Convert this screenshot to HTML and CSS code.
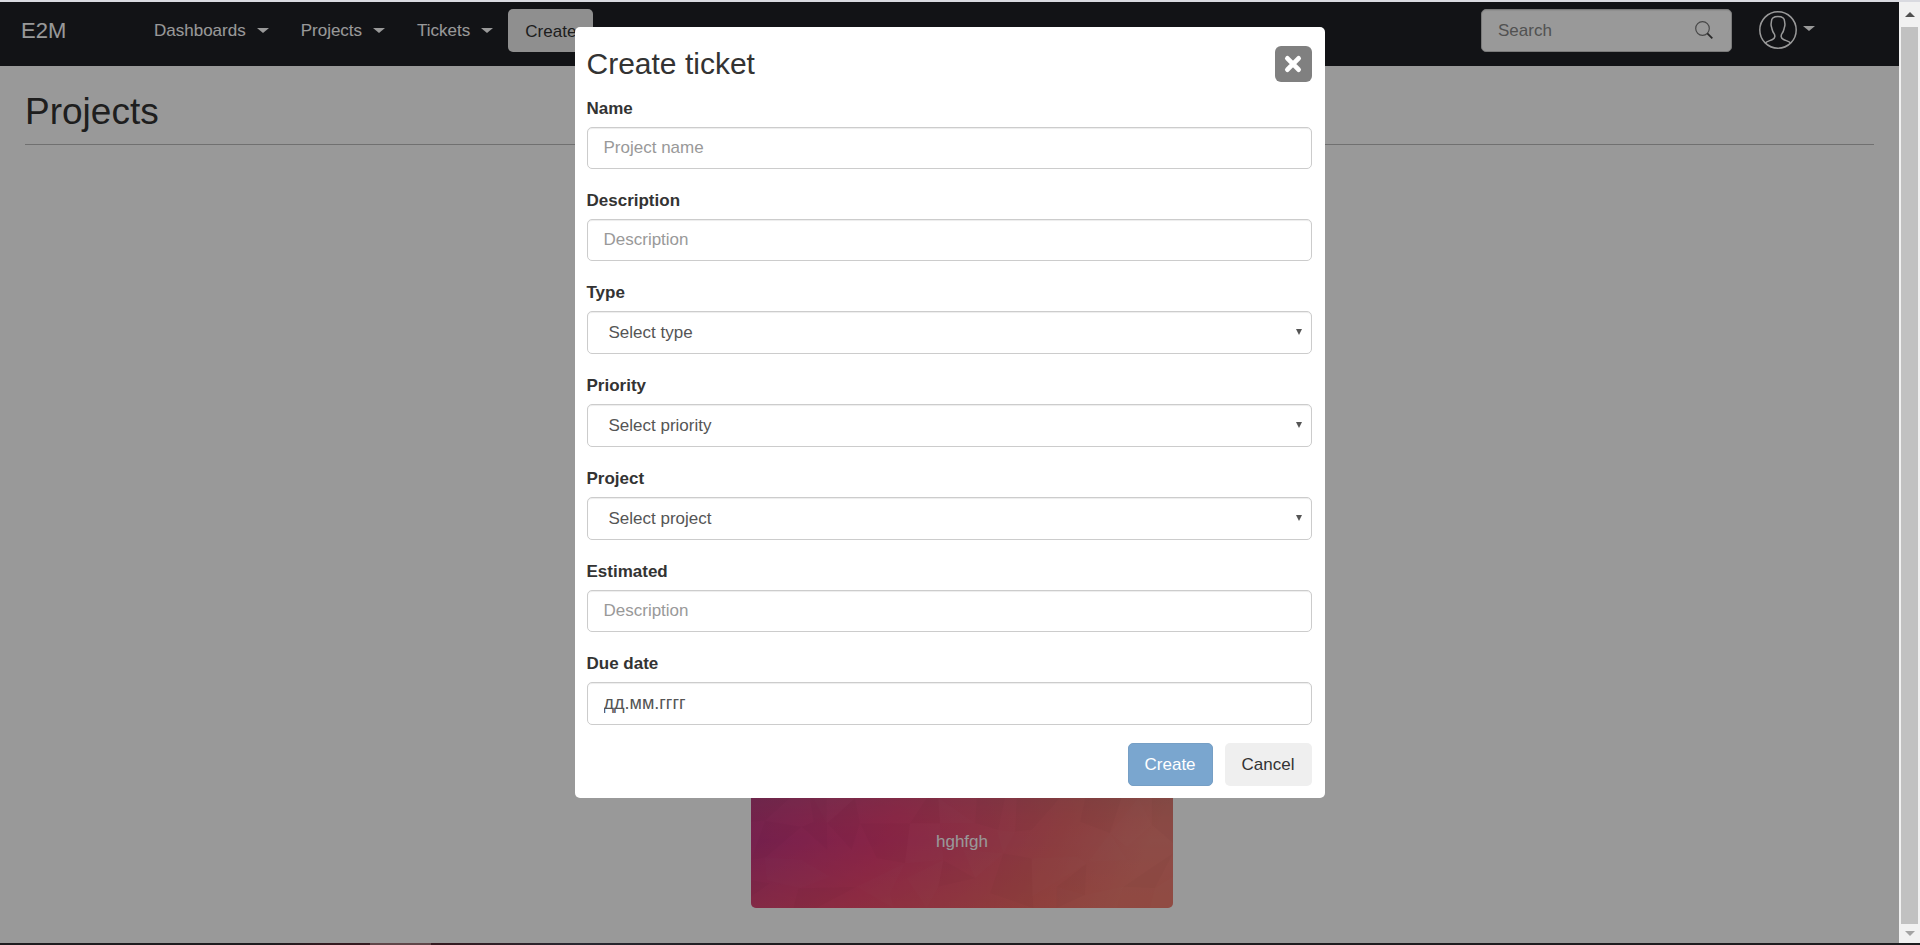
FILE: index.html
```html
<!DOCTYPE html>
<html lang="en">
<head>
<meta charset="utf-8">
<title>E2M - Projects</title>
<link rel="stylesheet" href="styles.css">
</head>
<body>
<div class="edge edge-top"></div>
<div class="viewport">
  <div class="page">
    <nav class="navbar">
      <a class="brand" href="#">E2M</a>
      <div class="menu">
        <a class="menu-link" href="#">Dashboards<span class="caret"></span></a>
        <a class="menu-link" href="#">Projects<span class="caret"></span></a>
        <a class="menu-link" href="#">Tickets<span class="caret"></span></a>
        <button class="btn btn-plain nav-create" type="button">Create</button>
      </div>
      <div class="search">
        <input class="control search-input" type="text" placeholder="Search" aria-label="Search">
        <svg class="search-icon" viewBox="0 0 20 20" width="20" height="20"><circle cx="8.500" cy="8.500" r="6.800" fill="none" stroke="#777" stroke-width="1.200"/><path d="M13.300 13.300l5 5" stroke="#444" stroke-width="1.800"/></svg>
      </div>
      <a class="user" href="#" aria-label="Account">
        <svg viewBox="0 0 38 38" width="38" height="38" fill="none" stroke="#fff" stroke-width="1.500"><circle cx="19" cy="19" r="18.200"/><path d="M6.500 32C8 30 11 29.800 13.500 28.500C16.500 27 16.300 24.500 14.800 22.200C12.900 19.500 13.300 18.500 12.500 16C11.500 13.500 12.300 12.500 12.400 10.500C12.500 7 15.500 5.600 19 5.600C22.500 5.600 25.500 7 25.600 10.500C25.700 12.500 26.500 13.500 25.500 16C24.700 18.500 25.100 19.500 23.200 22.200C21.700 24.500 21.500 27 24.500 28.500C27 29.800 30 30 31.500 32"/></svg>
        <span class="caret"></span>
      </a>
    </nav>
    <main class="content">
      <h1 class="page-title">Projects</h1>
      <a class="card" href="#">
        <svg class="card-art" viewBox="63 -18 1266 402" preserveAspectRatio="none">
          <defs>
            <linearGradient id="tone" x1="0" y1="0" x2="1" y2="0.150"><stop offset="0" stop-color="#bc3685"/><stop offset=".2" stop-color="#d3397e"/><stop offset=".38" stop-color="#e43d76"/><stop offset=".58" stop-color="#e65072"/><stop offset=".78" stop-color="#e8666b"/><stop offset="1" stop-color="#ec7f77"/></linearGradient>
            <linearGradient id="low" x1="0" y1="0" x2="0" y2="1"><stop offset=".1" stop-color="#8a8078" stop-opacity=".22"/><stop offset=".5" stop-color="#ff5a50" stop-opacity="0"/><stop offset="1" stop-color="#ff7050" stop-opacity=".25"/></linearGradient>
          </defs>
          <rect x="63" y="-18" width="1266" height="402" fill="url(#tone)"/>
          <rect x="63" y="-18" width="1266" height="402" fill="url(#low)"/>
          <g fill="#000" fill-opacity=".02">
            <path d="M63 125L105 122L180 54L63 0zM215 140L292 210L290 54L240 54L250 125zM375 54L390 130L365 210L292 130zM63 240L108 232L215 140L105 122zM440 235L525 250L540 130L390 130zM625 54L630 130L540 130L590 54zM740 54L735 130L805 150L825 54zM855 155L905 150L990 54L860 54zM1065 54L1050 125L1140 160L1175 54zM1265 54L1265 135L1329 190V54zM205 325L190 384L260 384L380 320zM625 320L735 295L640 240zM780 340L820 220L905 235L910 384zM1065 345L1070 250L980 320V384zM1180 320L1275 325L1329 220zM63 350L120 310L63 300z"/>
          </g>
          <g fill="#fff" fill-opacity=".02">
            <path d="M105 232L215 240L210 325L110 300zM215 240L300 290L210 325zM380 320L525 250L480 340L490 384zM530 295L640 240L625 320L590 384zM735 295L820 220L700 210zM905 235L1040 230L1070 250L905 350zM1075 245L1140 160L1190 240zM1140 160L1225 54L1265 135L1190 200zM800 150L855 155L820 220zM250 54L375 54L290 130zM540 130L630 130L640 240L525 250zM980 320L1065 345L1180 320L1160 384H980zM1275 325L1329 290V384L1260 384zM630 130L735 130L625 54z"/>
          </g>
        </svg>
        <span class="card-name">hghfgh</span>
      </a>
    </main>
  </div>
  <div class="backdrop">
    <form class="modal" role="dialog" aria-labelledby="dialog-title">
      <header class="modal-head">
        <h2 class="modal-title" id="dialog-title">Create ticket</h2>
        <button class="close" type="button" aria-label="Close"><svg viewBox="0 0 18 18" width="18" height="18"><path d="M3.400 3.400L14.600 14.600M14.600 3.400L3.400 14.600" stroke="#fff" stroke-width="4.800" stroke-linecap="round"/></svg></button>
      </header>
      <div class="field"><label for="name">Name</label><input class="control" id="name" type="text" placeholder="Project name"></div>
      <div class="field"><label for="desc">Description</label><input class="control" id="desc" type="text" placeholder="Description"></div>
      <div class="field"><label for="type">Type</label><div class="pick"><select class="control" id="type"><option>Select type</option></select><span class="arrow"></span></div></div>
      <div class="field"><label for="priority">Priority</label><div class="pick"><select class="control" id="priority"><option>Select priority</option></select><span class="arrow"></span></div></div>
      <div class="field"><label for="project">Project</label><div class="pick"><select class="control" id="project"><option>Select project</option></select><span class="arrow"></span></div></div>
      <div class="field"><label for="estimated">Estimated</label><input class="control" id="estimated" type="text" placeholder="Description"></div>
      <div class="field"><label for="due">Due date</label><input class="control date" id="due" type="text" placeholder="дд.мм.гггг"></div>
      <footer class="actions">
        <button class="btn btn-primary" type="submit">Create</button>
        <button class="btn btn-plain" type="button">Cancel</button>
      </footer>
    </form>
  </div>
  <div class="scrollbar"><span class="scroll-up"></span><span class="thumb"></span><span class="scroll-down"></span></div>
</div>
<div class="edge edge-bottom"></div>
</body>
</html>
```
FILE: styles.css
```css
* { box-sizing: border-box; }
body {
  margin: 0;
  height: 100vh;
  display: flex;
  flex-direction: column;
  overflow: hidden;
  font: 17px/25px "Liberation Sans", Arial, sans-serif;
  color: #333;
  background: #fff;
}
a { color: inherit; text-decoration: none; }
.edge { flex: none; height: 2px; }
.edge-top { background: #d9dae0; }
.edge-bottom {
  background: linear-gradient(90deg, #1e1c1f 0 270px, #351a20 330px 370px, #604649 370px 431px, #351a20 431px 440px, #292831 580px, #1e1c1f 760px);
}
.viewport { flex: 1; min-height: 0; display: flex; position: relative; }
.page { flex: 1; display: flex; flex-direction: column; }

.navbar {
  display: flex;
  align-items: flex-start;
  height: 64px;
  padding: 7px 84px 0 21px;
  background: #1e2026;
  color: #fff;
}
.brand { width: 133px; font-size: 22px; line-height: 43px; }
.menu { display: flex; gap: 32px; flex: 1; line-height: 43px; }
.menu-link { display: flex; align-items: center; gap: 11px; }
.caret {
  border: 6px solid transparent;
  border-top: 5px solid #fff;
  border-bottom: 0;
}
.nav-create { margin-left: -17px; }
.search { position: relative; width: 251px; margin-right: 27px; }
.search-icon { position: absolute; right: 18px; top: 11px; }
.user { display: flex; align-items: flex-start; gap: 6px; padding-top: 2px; }
.user .caret { margin-top: 15px; }

.content {
  flex: 1;
  display: flex;
  flex-direction: column;
  padding: 25px 25px 35px;
}
.page-title {
  margin: 0;
  padding-bottom: 12px;
  border-bottom: 1px solid #bbb;
  font-size: 37px;
  line-height: 41px;
  font-weight: 400;
}
.card {
  position: relative;
  display: flex;
  align-items: center;
  justify-content: center;
  align-self: center;
  width: 422px;
  height: 134px;
  margin: auto 0 0 25px;
  border-radius: 5px;
  overflow: hidden;
  color: #fff;
}
.card-art { position: absolute; inset: 0; width: 100%; height: 100%; }
.card-name { position: relative; }

.backdrop {
  position: absolute;
  inset: 0 21px 0 0;
  display: flex;
  align-items: flex-start;
  justify-content: center;
  padding-top: 25px;
  background: rgba(0, 0, 0, .4);
}
.modal {
  width: 750px;
  padding: 19px 13px 12px 12px;
  border-radius: 5px;
  background: #fff;
}
.modal-head {
  display: flex;
  align-items: center;
  justify-content: space-between;
  margin-bottom: 14px;
}
.modal-title { margin: 0; font-size: 30px; line-height: 36px; font-weight: 400; }
.close {
  display: flex;
  align-items: center;
  justify-content: center;
  width: 37px;
  height: 36px;
  padding: 0;
  border: 0;
  border-radius: 6px;
  background: #808080;
}
.field { margin-bottom: 19px; }
.field label { display: block; margin-bottom: 6px; font-weight: 700; }
.control {
  display: block;
  width: 100%;
  height: 42px;
  padding: 0 16px;
  border: 1px solid #ccc;
  border-radius: 5px;
  background: #fff;
  box-shadow: inset 0 1px 1px rgba(0, 0, 0, .075);
  font: inherit;
  color: #555;
}
.control::placeholder { color: #999; opacity: 1; }
.search-input, select.control, .control.date { height: 43px; }
.search-input::placeholder { color: #888; }
select.control { appearance: none; padding-left: 21px; }
.control.date { font-size: 18px; }
.control.date::placeholder { color: #555; }
.pick { position: relative; }
.arrow {
  position: absolute;
  right: 10px;
  top: 18px;
  border: 3px solid transparent;
  border-top: 6px solid #555;
  border-bottom: 0;
}
.actions { display: flex; justify-content: flex-end; gap: 12px; margin-top: -1px; }
.btn {
  height: 43px;
  padding: 0 16px;
  border: 1px solid transparent;
  border-radius: 5px;
  font: inherit;
}
.btn-primary { background: #7aa6cf; border-color: #769fc5; color: #fff; }
.btn-plain { background: #efefef; color: #333; }

.scrollbar {
  width: 21px;
  padding: 10px 2px 7px;
  display: flex;
  flex-direction: column;
  align-items: center;
  background: #f1f1f1;
}
.scroll-up { border: 5px solid transparent; border-bottom: 5px solid #505050; border-top: 0; }
.thumb { flex: 1; width: 17px; margin: 10px 0 7px; background: #c1c1c1; }
.scroll-down { border: 5px solid transparent; border-top: 5px solid #a3a3a3; border-bottom: 0; }
```
